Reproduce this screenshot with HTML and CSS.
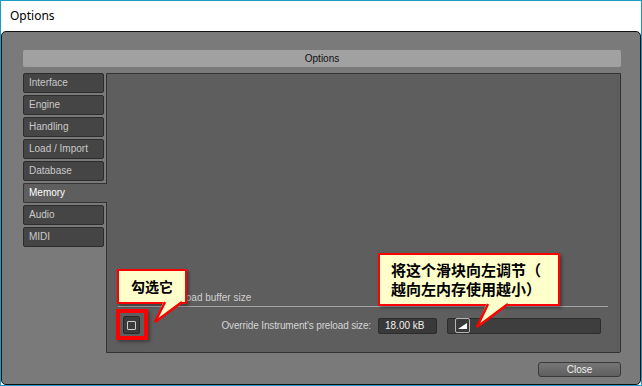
FILE: index.html
```html
<!DOCTYPE html>
<html>
<head>
<meta charset="utf-8">
<link rel="stylesheet" href="styles.css">
</head>
<body>
<div class="window">
  <div class="titlebar">Options</div>
  <div class="panel">
    <div class="header">Options</div>
    <div class="main">
      <div class="tabs">
        <div class="tab">Interface</div>
        <div class="tab">Engine</div>
        <div class="tab">Handling</div>
        <div class="tab">Load / Import</div>
        <div class="tab">Database</div>
        <div class="tab active">Memory</div>
        <div class="tab">Audio</div>
        <div class="tab">MIDI</div>
      </div>
      <div class="content">
        <div class="group-title">Preload buffer size</div>
        <div class="row">
          <div class="checkbox"><span class="box"></span></div>
          <div class="row-label">Override Instrument's preload size:</div>
          <div class="value">18.00 kB</div>
          <div class="slider">
            <div class="knob">
              <svg width="13" height="13" viewBox="0 0 13 13"><polygon points="2,10 11,10 11,4" fill="#fff"/></svg>
            </div>
          </div>
        </div>
      </div>
    </div>
    <div class="footer"><div class="close">Close</div></div>
  </div>

  <div class="highlight"></div>
  <div class="callout c1">勾选它</div>
  <div class="callout c2">将这个滑块向左调节（<br>越向左内存使用越小）</div>
  <svg class="tails" width="642" height="386" viewBox="0 0 642 386">
    <polygon points="164,300 183,300 155,322" fill="#ffffcc"/>
    <polyline points="165,302 155,322 182,302" fill="none" stroke="#ff0000" stroke-width="2.5"/>
    <polygon points="487,302 509,302 477,327" fill="#ffffcc"/>
    <polyline points="488,304 477,327 508,304" fill="none" stroke="#ff0000" stroke-width="2.5"/>
  </svg>
</div>
</body>
</html>
```

FILE: styles.css
```css
* { box-sizing: border-box; }
html, body { margin: 0; padding: 0; }
body { width: 642px; height: 386px; overflow: hidden; background: #fff; }

.window {
  position: relative;
  width: 642px;
  height: 386px;
  border: 1px solid #1a9cc4;
  display: flex;
  flex-direction: column;
  font-family: "Liberation Sans", Arial, sans-serif;
}

.titlebar {
  height: 30px;
  line-height: 30px;
  padding-left: 9px;
  background: #fff;
  color: #000;
  font-family: "Noto Sans", "Open Sans", sans-serif;
  font-size: 12px;
}

.panel {
  flex: 1;
  background: #7a7a7a;
  border: 1px solid #111;
  border-radius: 5px;
  padding: 18px 19px 0 21px;
  display: flex;
  flex-direction: column;
}

.header {
  height: 17px;
  background: #a1a1a1;
  border-radius: 2px;
  text-align: center;
  font-size: 10px;
  line-height: 17px;
  color: #111;
}

.main {
  margin-top: 6px;
  height: 280px;
  display: flex;
}

.tabs {
  width: 83px;
  flex: none;
  display: flex;
  flex-direction: column;
  gap: 2px;
}

.tab {
  width: 81px;
  height: 20px;
  background: #454545;
  border: 1px solid #2c2c2c;
  border-radius: 2px;
  color: #c9c9c9;
  font-size: 10px;
  line-height: 18px;
  padding-left: 5px;
}

.tab.active {
  width: 84px;
  background: #5e5e5e;
  border-color: #333;
  border-right: none;
  border-radius: 2px 0 0 2px;
  color: #fff;
  position: relative;
  z-index: 1;
}

.content {
  flex: 1;
  background: #5e5e5e;
  border: 1px solid #333;
  border-radius: 0 0 2px 0;
  display: flex;
  flex-direction: column;
  justify-content: flex-end;
  padding: 0 12px 18px 11px;
}

.group-title {
  font-size: 10px;
  color: #d0d0d0;
  padding-left: 50px;
  line-height: 12px;
  padding-bottom: 2px;
  border-bottom: 1px solid #a3a3a3;
  margin-bottom: 9px;
}

.row {
  display: flex;
  align-items: flex-end;
  height: 18px;
}

.checkbox {
  width: 17px;
  height: 18px;
  margin-left: 5px;
  background: #3b3b3b;
  border: 1px solid #2a2a2a;
  border-radius: 2px;
  display: flex;
  align-items: center;
  justify-content: center;
}
.checkbox .box {
  width: 9px;
  height: 9px;
  border: 1px solid #cfcfcf;
  border-radius: 1px;
}

.row-label {
  flex: 1;
  text-align: right;
  padding-right: 7px;
  font-size: 10px;
  letter-spacing: -0.15px;
  color: #d4d4d4;
  line-height: 16px;
}

.value {
  width: 59px;
  height: 16px;
  background: #393939;
  border: 1px solid #2b2b2b;
  border-radius: 2px;
  color: #f2f2f2;
  font-size: 10px;
  line-height: 14px;
  padding-left: 6px;
}

.slider {
  width: 154px;
  height: 16px;
  margin-left: 10px;
  margin-right: 7px;
  background: #3e3e3e;
  border: 1px solid #2d2d2d;
  border-radius: 2px;
  padding-left: 7px;
}

.knob {
  width: 15px;
  height: 15px;
  margin-top: -1px;
  background: #3a3a3a;
  border: 1px solid #b5b5b5;
  border-radius: 2px;
}
.knob svg { display: block; }

.footer {
  display: flex;
  justify-content: flex-end;
  margin-top: 9px;
}

.close {
  width: 83px;
  height: 15px;
  background: linear-gradient(#767676, #5f5f5f);
  border: 1px solid #3a3a3a;
  border-radius: 3px;
  color: #f0f0f0;
  font-size: 10px;
  line-height: 13px;
  text-align: center;
}

.highlight {
  position: absolute;
  left: 115px;
  top: 308px;
  width: 32px;
  height: 31px;
  border: 4px solid #ff0000;
  box-shadow: 2px 2px 3px rgba(0,0,0,0.35);
}

.callout {
  position: absolute;
  background: #ffffcc;
  border: 2px solid #ff0000;
  color: #000;
  font-family: "Noto Sans CJK SC", "Noto Sans", sans-serif;
  font-weight: 700;
  box-shadow: 2px 2px 3px rgba(0,0,0,0.35);
}

.c1 {
  left: 116px;
  top: 268px;
  width: 70px;
  height: 35px;
  font-size: 14px;
  line-height: 31px;
  text-align: center;
}

.c2 {
  left: 377px;
  top: 252px;
  width: 182px;
  height: 53px;
  font-size: 15px;
  line-height: 19px;
  padding: 5px 0 0 11px;
}

.tails {
  position: absolute;
  left: -1px;
  top: -1px;
  pointer-events: none;
}
```
